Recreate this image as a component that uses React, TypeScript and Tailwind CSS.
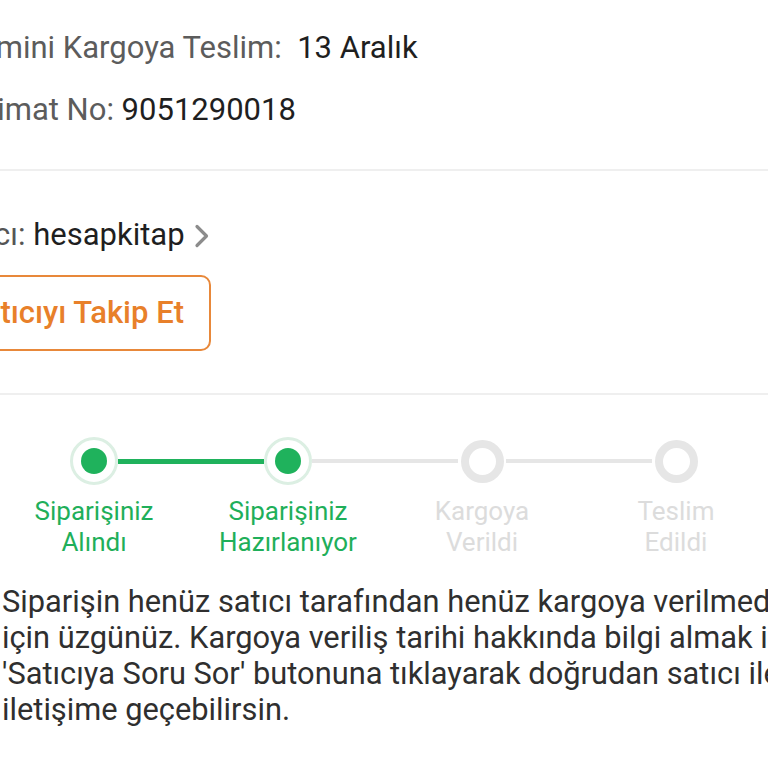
import React from 'react';

type Step = { title: string; sub: string; done: boolean };

const steps: Step[] = [
  { title: 'Siparişiniz', sub: 'Alındı', done: true },
  { title: 'Siparişiniz', sub: 'Hazırlanıyor', done: true },
  { title: 'Kargoya', sub: 'Verildi', done: false },
  { title: 'Teslim', sub: 'Edildi', done: false },
];

function StepDot({ done }: { done: boolean }) {
  return (
    <div className="w-[48px] h-[48px] shrink-0 flex items-center justify-center">
      {done ? (
        <div className="w-[48px] h-[48px] rounded-full border-[3px] border-[#dcefe3] bg-white flex items-center justify-center">
          <div className="w-[26px] h-[26px] rounded-full bg-[#1fb25c]" />
        </div>
      ) : (
        <div className="w-[43px] h-[43px] rounded-full border-[8px] border-[#e6e6e6] bg-white" />
      )}
    </div>
  );
}

function Stepper() {
  return (
    <div className="flex -ml-[3px] pt-[42px]">
      {steps.map((s, i) => {
        const leftOn = i > 0;
        const rightOn = i < steps.length - 1;
        const leftGreen = s.done;
        const rightGreen = s.done && i + 1 < steps.length && steps[i + 1].done;
        return (
          <div key={i} className="w-[194px] shrink-0 flex flex-col items-center">
            <div className="w-full flex items-center">
              <div className="flex-1 flex items-center">
                {leftOn && (
                  <div className={leftGreen ? 'w-full h-[5px] bg-[#1fb25c]' : 'w-full h-[4px] bg-[#e6e6e6]'} />
                )}
              </div>
              <StepDot done={s.done} />
              <div className="flex-1 flex items-center">
                {rightOn && (
                  <div className={rightGreen ? 'w-full h-[5px] bg-[#1fb25c]' : 'w-full h-[4px] bg-[#e6e6e6]'} />
                )}
              </div>
            </div>
            <div
              className={`mt-[11px] text-center text-[26px] leading-[31px] ${
                s.done ? 'text-[#1faf5a]' : 'text-[#dcdcdc]'
              }`}
            >
              <div>{s.title}</div>
              <div>{s.sub}</div>
            </div>
          </div>
        );
      })}
    </div>
  );
}

export default function App() {
  return (
    <div className="w-[768px] h-[768px] overflow-hidden bg-white font-['Roboto',sans-serif]">
      {/* Order info */}
      <div className="pt-[17px] pb-[28px] text-[31px] leading-[62px] whitespace-nowrap">
        <div className="-ml-[55px]">
          <span className="text-[#5c5c5c]">Tahmini Kargoya Teslim:</span>
          <span className="text-[#1f1f1f]">{'\u00a0 '}13 Aralık</span>
        </div>
        <div className="-ml-[44px]">
          <span className="text-[#5c5c5c]">Talimat No: </span>
          <span className="text-[#1f1f1f]">9051290018</span>
        </div>
      </div>
      <div className="h-[2px] bg-[#efefef]" />

      {/* Seller */}
      <div className="pt-[44px] pb-[42px] -ml-[59px] whitespace-nowrap">
        <div className="flex items-center text-[31px] leading-[40px] h-[40px]">
          <span className="text-[#555]">Satıcı:&nbsp;</span>
          <span className="text-[#1f1f1f]">hesapkitap</span>
          <svg className="ml-[9px] mt-[2px]" width="16" height="24" viewBox="0 0 16 24" fill="none">
            <path d="M3 2.5 L12.5 12 L3 21.5" stroke="#8c8c8c" strokeWidth="3.2" strokeLinecap="round" strokeLinejoin="round" />
          </svg>
        </div>
        <button className="mt-[20px] w-[270px] h-[76px] rounded-[10px] border-2 border-[#e8883a] text-[#e8802a] text-[31px] font-medium flex items-center justify-end pr-[25px]">
          Satıcıyı Takip Et
        </button>
      </div>
      <div className="h-[2px] bg-[#efefef]" />

      {/* Status */}
      <Stepper />

      <p className="mt-[26px] ml-[2px] text-[30.8px] leading-[36px] text-[#2f2f2f] whitespace-nowrap">
        Siparişin henüz satıcı tarafından henüz kargoya verilmediği
        <br />
        için üzgünüz. Kargoya veriliş tarihi hakkında bilgi almak için
        <br />
        'Satıcıya Soru Sor' butonuna tıklayarak doğrudan satıcı ile
        <br />
        iletişime geçebilirsin.
      </p>
    </div>
  );
}
